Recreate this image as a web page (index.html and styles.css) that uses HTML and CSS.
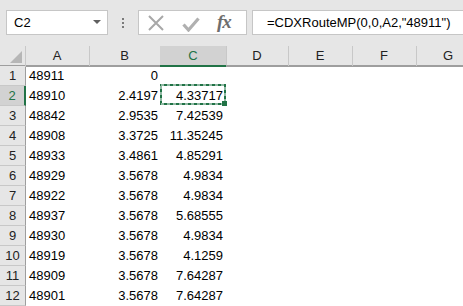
FILE: index.html
```html
<!DOCTYPE html>
<html lang="en">
<head>
  <meta charset="UTF-8" />
  <title>Sheet – CDXRouteMP</title>
  <link rel="stylesheet" href="styles.css">
</head>
<body>

  <!-- Name box + formula bar -->
  <div class="formula-bar">
    <div class="name-box">
      <span>C2</span>
      <span class="caret"></span>
    </div>
    <div class="grip"><i></i><i></i><i></i></div>
    <div class="fx-buttons">
      <svg class="icon-x" width="18" height="16" viewBox="0 0 18 16">
        <path d="M2 1 L16 15 M16 1 L2 15" stroke="#a8a8a8" stroke-width="2" fill="none"/>
      </svg>
      <svg class="icon-check" width="18" height="15" viewBox="0 0 18 15">
        <path d="M1.5 7.5 L6.5 13 L16.5 1.5" stroke="#b0b0b0" stroke-width="3.2" fill="none"/>
      </svg>
      <span class="fx">fx</span>
    </div>
    <div class="formula-input">=CDXRouteMP(0,0,A2,"48911")</div>
  </div>

  <!-- Sheet grid -->
  <div class="sheet">
    <div class="row head-row">
      <div class="corner"><span class="tri"></span></div>
      <div class="col-head">A</div>
      <div class="col-head">B</div>
      <div class="col-head active">C</div>
      <div class="col-head">D</div>
      <div class="col-head">E</div>
      <div class="col-head">F</div>
      <div class="col-head">G</div>
    </div>

    <div class="row"><div class="row-head">1</div><div class="cell">48911</div><div class="cell num">0</div><div class="cell num c"></div></div>
    <div class="row"><div class="row-head active">2</div><div class="cell">48910</div><div class="cell num">2.4197</div><div class="cell num c selected">4.33717<svg class="marquee" preserveAspectRatio="none" viewBox="0 0 67 22"><rect x="1" y="1" width="64" height="19" fill="none" stroke="#217346" stroke-width="2"/><rect x="1" y="1" width="64" height="19" fill="none" stroke="#fff" stroke-width="1" stroke-dasharray="3 3"/><rect x="62" y="17" width="5" height="5" fill="#217346"/></svg></div></div>
    <div class="row"><div class="row-head">3</div><div class="cell">48842</div><div class="cell num">2.9535</div><div class="cell num c">7.42539</div></div>
    <div class="row"><div class="row-head">4</div><div class="cell">48908</div><div class="cell num">3.3725</div><div class="cell num c">11.35245</div></div>
    <div class="row"><div class="row-head">5</div><div class="cell">48933</div><div class="cell num">3.4861</div><div class="cell num c">4.85291</div></div>
    <div class="row"><div class="row-head">6</div><div class="cell">48929</div><div class="cell num">3.5678</div><div class="cell num c">4.9834</div></div>
    <div class="row"><div class="row-head">7</div><div class="cell">48922</div><div class="cell num">3.5678</div><div class="cell num c">4.9834</div></div>
    <div class="row"><div class="row-head">8</div><div class="cell">48937</div><div class="cell num">3.5678</div><div class="cell num c">5.68555</div></div>
    <div class="row"><div class="row-head">9</div><div class="cell">48930</div><div class="cell num">3.5678</div><div class="cell num c">4.9834</div></div>
    <div class="row"><div class="row-head">10</div><div class="cell">48919</div><div class="cell num">3.5678</div><div class="cell num c">4.1259</div></div>
    <div class="row"><div class="row-head">11</div><div class="cell">48909</div><div class="cell num">3.5678</div><div class="cell num c">7.64287</div></div>
    <div class="row"><div class="row-head">12</div><div class="cell">48901</div><div class="cell num">3.5678</div><div class="cell num c">7.64287</div></div>
  </div>

</body>
</html>
```

FILE: styles.css
```css
:root {
  --chrome: #e6e6e6;
  --chrome-sel: #d2d2d2;
  --box-border: #c6c6c6;
  --head-line: #c8c8c8;
  --head-edge: #9e9e9e;
  --green: #217346;
  --cols: 26px 64px 71px 66px 62px 64px 64px 64px;
}

html, body {
  margin: 0;
  height: 100%;
  overflow: hidden;
}

body {
  font-family: 'Liberation Sans', Arial, sans-serif;
  font-size: 13px;
  color: #000;
  background: #fff;
}

/* formula bar */
.formula-bar {
  height: 46px;
  background: var(--chrome);
  display: flex;
  align-items: flex-start;
  padding: 10px 0 0 6px;
  box-sizing: border-box;
}

.name-box,
.fx-buttons,
.formula-input {
  height: 25px;
  box-sizing: border-box;
  background: #fff;
  border: 1px solid var(--box-border);
}

.name-box {
  width: 102px;
  display: flex;
  align-items: center;
  justify-content: space-between;
  padding: 0 6px 0 7px;
  font-size: 13px;
}

.caret {
  width: 0;
  height: 0;
  border-left: 4px solid transparent;
  border-right: 4px solid transparent;
  border-top: 4px solid #606060;
  margin-top: -1px;
}

.grip {
  width: 30px;
  height: 25px;
  display: flex;
  flex-direction: column;
  align-items: center;
  justify-content: center;
  gap: 2px;
}

.grip i {
  width: 2px;
  height: 2px;
  background: #7a7a7a;
}

.fx-buttons {
  width: 109px;
  display: flex;
  align-items: center;
  padding-left: 8px;
}

.icon-x {
  margin-top: 1px;
}

.icon-check {
  margin-left: 17px;
  margin-top: 3px;
}

.fx {
  margin-left: 17px;
  font-family: 'Liberation Serif', 'Times New Roman', serif;
  font-style: italic;
  font-weight: bold;
  font-size: 19px;
  color: #6e6e6e;
  letter-spacing: -1px;
  margin-top: -2px;
}

.formula-input {
  flex: 1;
  margin-left: 5px;
  margin-right: -2px;
  padding-left: 14px;
  line-height: 23px;
  font-size: 13px;
  white-space: nowrap;
}

/* grid */
.row {
  display: grid;
  grid-template-columns: var(--cols);
  height: 20px;
  line-height: 20px;
}

.head-row {
  background: var(--chrome);
  box-shadow: inset 0 -1px 0 var(--head-edge);
}

.corner {
  position: relative;
  border-right: 1px solid var(--head-line);
}

.corner .tri {
  position: absolute;
  right: 3px;
  bottom: 4px;
  width: 0;
  height: 0;
  border-left: 12px solid transparent;
  border-bottom: 12px solid #b6b6b6;
}

.col-head {
  text-align: center;
  color: #222;
  border-right: 1px solid var(--head-line);
  border-bottom: 1px solid var(--head-edge);
  line-height: 19px;
  margin-left: -1px;
}

.col-head.active {
  background: var(--chrome-sel);
  color: var(--green);
  border-bottom: 2px solid var(--green);
  line-height: 19px;
}

.row-head {
  background: var(--chrome);
  text-align: center;
  color: #222;
  border-right: 1px solid var(--head-edge);
  border-bottom: 1px solid var(--head-line);
  line-height: 19px;
}

.row-head.active {
  background: var(--chrome-sel);
  color: var(--green);
  border-right: 2px solid var(--green);
}

.cell {
  padding: 0 3px;
  white-space: nowrap;
}

.cell.num {
  text-align: right;
}

.cell.c {
  padding-right: 4px;
}

.selected {
  position: relative;
}

.marquee {
  position: absolute;
  left: -1px;
  top: -2px;
  width: 67px;
  height: 22px;
}
```
